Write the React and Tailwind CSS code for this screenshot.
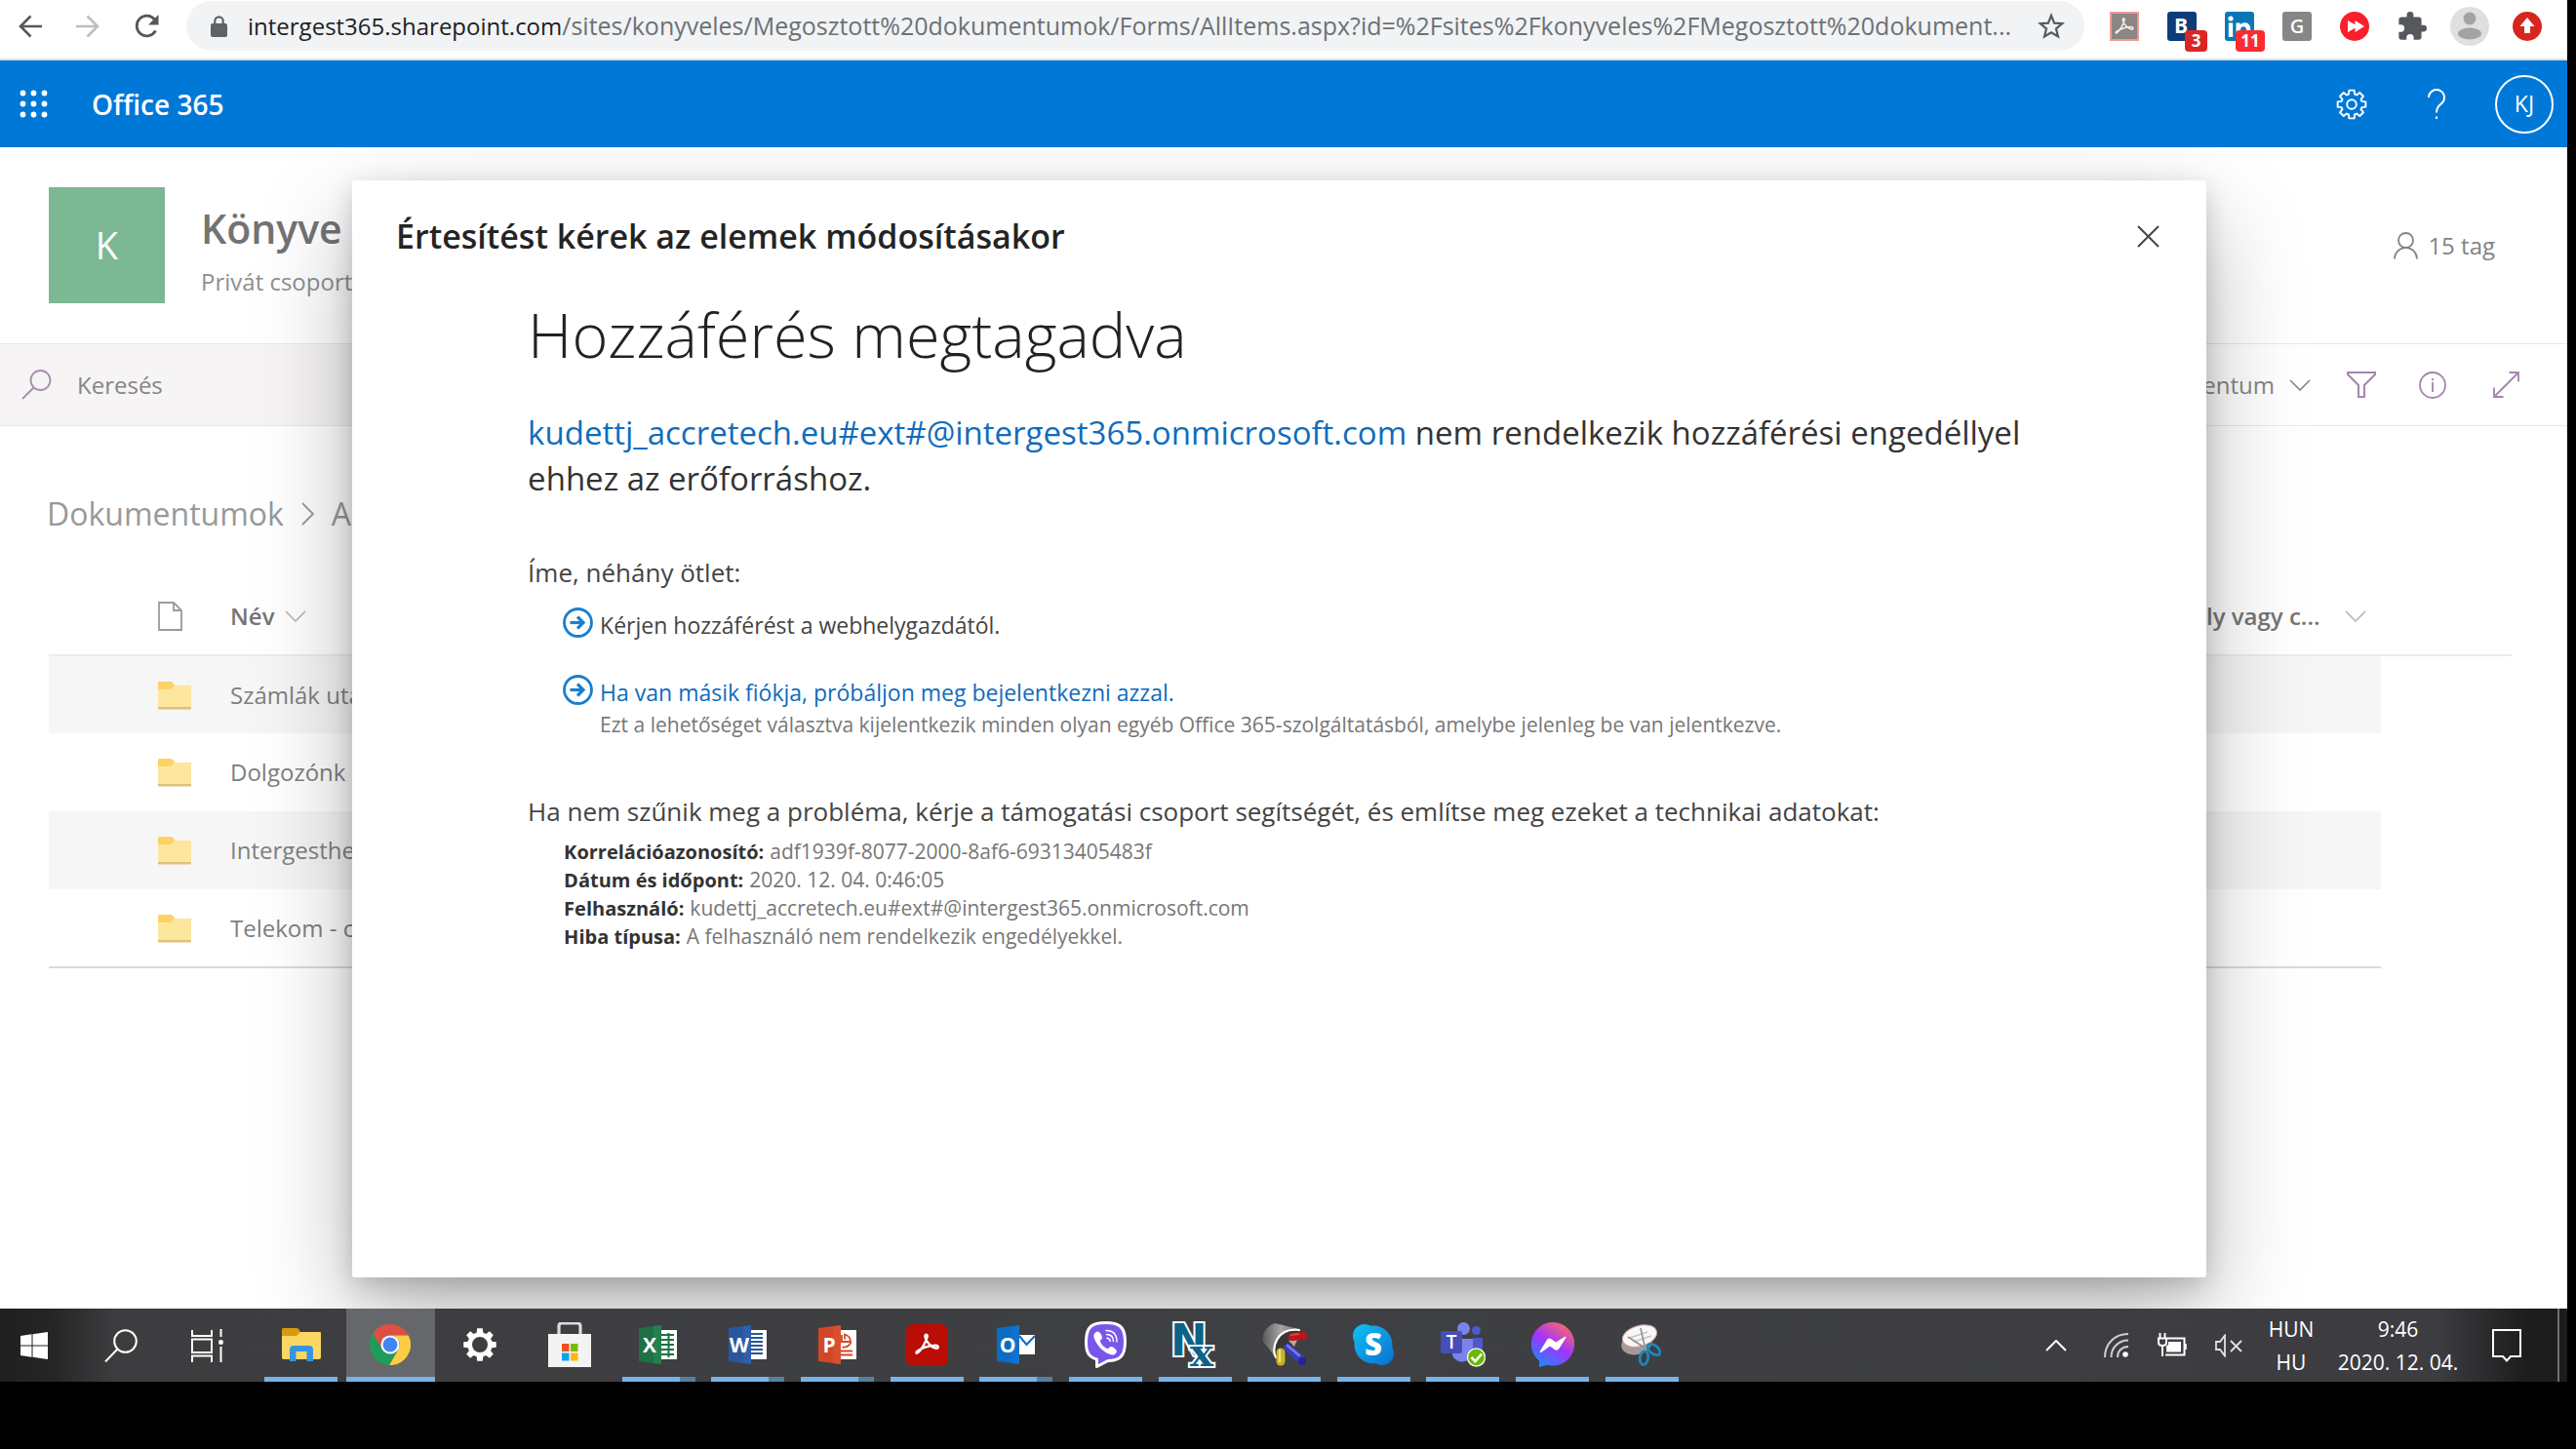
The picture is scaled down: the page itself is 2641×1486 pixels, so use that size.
import React from "react";

/* ---------- shared helpers ---------- */

function gearPath(cx, cy, teeth, outer, inner, spread = 0.5) {
  const step = (Math.PI * 2) / teeth;
  const at = (r, a) => `${(cx + r * Math.sin(a)).toFixed(2)} ${(cy - r * Math.cos(a)).toFixed(2)}`;
  let d = "";
  for (let i = 0; i < teeth; i++) {
    const a = i * step;
    const half = (step * spread) / 2;
    d += `${i ? "L" : "M"}${at(inner, a - half * 1.35)}L${at(outer, a - half * 0.85)}L${at(outer, a + half * 0.85)}L${at(inner, a + half * 1.35)}`;
  }
  return d + "Z";
}

const AcrobatMark = ({ color, width = 1.8 }) => (
  <path
    d="M4.2 18.6C7.6 16.6 11.6 8.4 12.2 5.2c.3-1.9-2.2-2.1-1.9.2.6 4.4 5.6 9.3 9.3 9.6 2 .1 1.900-2.500-.6-2.500-4.600 0-11.500 2.300-14.800 4.700-1.700 1.300-1 2.400 0 1.400Z"
    fill="none"
    stroke={color}
    strokeWidth={width}
    strokeLinejoin="round"
  />
);

/* ---------- browser bar ---------- */

function BrowserBar() {
  return (
    <header className="flex h-[62px] items-center border-b-2 border-[#dcdfe3] bg-white pr-[26px] pb-[7px] pl-[19px]">
      <nav className="flex items-center gap-[35px] text-[#55585c]">
        <button aria-label="Vissza">
          <svg className="size-[24px]" viewBox="0 0 24 24" fill="none" stroke="currentColor" strokeWidth="2.6">
            <path d="M24 12H2M12.500 1.500 2 12l10.500 10.500" />
          </svg>
        </button>
        <button aria-label="Előre" className="text-[#bcbec1]">
          <svg className="size-[24px]" viewBox="0 0 24 24" fill="none" stroke="currentColor" strokeWidth="2.6">
            <path d="M0 12h22M11.500 1.500 22 12 11.500 22.500" />
          </svg>
        </button>
        <button aria-label="Újratöltés">
          <svg className="size-[26px]" viewBox="0 0 26 26" fill="none" stroke="currentColor" strokeWidth="2.8">
            <path d="M22.500 17.500A10.300 10.300 0 1 1 21.500 6" />
            <path d="M25.500 1v10.500H15Z" fill="currentColor" stroke="none" />
          </svg>
        </button>
      </nav>
      <div className="ml-[28px] flex h-[51px] min-w-0 flex-1 items-center rounded-full bg-[#f1f3f4] pr-[20px] pl-[25px]">
        <svg className="w-[17px] shrink-0" viewBox="0 0 17 22">
          <rect y="8" width="17" height="14" rx="2" fill="#5f6368" />
          <path d="M4.300 9V5.500a4.200 4.200 0 0 1 8.400 0V9" fill="none" stroke="#5f6368" strokeWidth="2.200" />
        </svg>
        <a href="#url" className="ml-[21px] min-w-0 flex-1 whitespace-nowrap text-[25px] leading-[36px] text-[#6d7175]">
          <span className="text-[24px] text-[#202124]">intergest365.sharepoint.com</span>
          /sites/konyveles/Megosztott%20dokumentumok/Forms/AllItems.aspx?id=%2Fsites%2Fkonyveles%2FMegosztott%20dokument...
        </a>
        <button aria-label="Könyvjelző">
          <svg className="size-[28px]" viewBox="0 0 28 28" fill="none" stroke="#55585c" strokeWidth="2.200">
            <path d="m14 3 3.100 7.600 8.200.6-6.300 5.300 2 8L14 20.200 7 24.500l2-8-6.300-5.300 8.200-.6Z" />
          </svg>
        </button>
      </div>
      <div className="ml-[26px] flex items-center gap-[29px]">
        <button aria-label="Adobe Acrobat">
          <svg className="size-[30px]" viewBox="0 0 30 30">
            <rect x="1" y="1" width="28" height="28" fill="#8b8584" stroke="#ee9a94" strokeWidth="2" />
            <g transform="translate(3 3)">
              <AcrobatMark color="#f3eeee" width={1.5} />
            </g>
          </svg>
        </button>
        <button aria-label="Bővítmény B" className="relative">
          <svg className="size-[30px]" viewBox="0 0 30 30">
            <rect width="30" height="30" rx="3" fill="#0b3d78" />
            <text x="14" y="22" textAnchor="middle" fontSize="21" fontWeight="700" fill="#fff">B</text>
          </svg>
          <span className="absolute top-[19px] left-[18px] flex h-[22px] w-[23px] items-center justify-center rounded-[4px] bg-[#dc2626] text-[17px] leading-none font-bold text-white">
            3
          </span>
        </button>
        <button aria-label="LinkedIn" className="relative">
          <svg className="size-[30px]" viewBox="0 0 30 30">
            <rect width="30" height="30" rx="3" fill="#0a77b5" />
            <g fill="#fff">
              <circle cx="6" cy="7" r="2.600" />
              <path d="M3.800 11.500h4.400V26H3.800ZM11.500 11.500h4.200v2c2.400-3.600 10.500-3.400 10.500 4V26H22v-7.500c0-4.500-6-4.400-6 0V26h-4.500Z" />
            </g>
          </svg>
          <span className="absolute top-[19px] left-[11px] flex h-[22px] w-[30px] items-center justify-center rounded-[4px] bg-[#fb2b32] text-[17px] leading-none font-bold text-white">
            11
          </span>
        </button>
        <button aria-label="Bővítmény G">
          <svg className="size-[30px]" viewBox="0 0 30 30">
            <rect width="30" height="30" rx="3" fill="#868686" />
            <text x="15" y="22" textAnchor="middle" fontSize="20" fontWeight="600" fill="#fff">G</text>
          </svg>
        </button>
        <button aria-label="Gyorsítás">
          <svg className="size-[30px]" viewBox="0 0 30 30">
            <circle cx="15" cy="15" r="15" fill="#fb1f2b" />
            <path d="M8 9l7.500 4.200V9L25 15l-9.500 6v-4.200L8 21Z" fill="#fff" />
          </svg>
        </button>
        <button aria-label="Bővítmények">
          <svg className="size-[30px]" viewBox="1 1 22 22" fill="#55585c">
            <path d="M20.500 11H19V7a2 2 0 0 0-2-2h-4V3.500a2.500 2.500 0 0 0-5 0V5H4a2 2 0 0 0-2 2v3.800h1.500a2.700 2.700 0 0 1 0 5.400H2V20a2 2 0 0 0 2 2h3.800v-1.500a2.700 2.700 0 0 1 5.400 0V22H17a2 2 0 0 0 2-2v-4h1.500a2.500 2.500 0 0 0 0-5Z" />
          </svg>
        </button>
        <button aria-label="Profil" className="-mx-[5px]">
          <svg className="size-[40px]" viewBox="0 0 40 40">
            <circle cx="20" cy="20" r="20" fill="#dfdfdf" />
            <circle cx="20" cy="12" r="6.500" fill="#a3a3a3" />
            <ellipse cx="20" cy="27.500" rx="12" ry="6" fill="#a3a3a3" />
          </svg>
        </button>
        <button aria-label="Frissítés">
          <svg className="size-[30px]" viewBox="0 0 30 30">
            <circle cx="15" cy="15" r="15" fill="#d7261e" />
            <path d="m15 6 7.500 9H18v7h-6v-7H7.500Z" fill="#fff" />
          </svg>
        </button>
      </div>
    </header>
  );
}

/* ---------- Office suite header ---------- */

function SuiteBar() {
  return (
    <div className="flex h-[89px] items-center bg-[#0078d7] pr-[14px] pl-[20px] text-white">
      <button aria-label="Alkalmazásindító">
        <svg className="size-[29px]" viewBox="0 0 29 29" fill="currentColor">
          {[3.5, 14.5, 25.5].map((y) => [3.5, 14.5, 25.5].map((x) => <circle key={`${x}-${y}`} cx={x} cy={y} r="2.900" />))}
        </svg>
      </button>
      <a href="#office" className="ml-[45px] text-[28px] font-semibold">Office 365</a>
      <div className="ml-auto flex items-center">
        <button aria-label="Beállítások">
          <svg className="size-[32px]" viewBox="0 0 32 32" fill="none" stroke="currentColor" strokeWidth="1.900" strokeLinejoin="round">
            <path d={gearPath(16, 16, 8, 14.6, 10.8, 0.55)} />
            <circle cx="16" cy="16" r="4.800" />
          </svg>
        </button>
        <button aria-label="Súgó" className="ml-[61px]">
          <svg className="h-[32px] w-[20px]" viewBox="0 0 20 32" fill="none" stroke="currentColor" strokeWidth="2">
            <path d="M2 9a8 8 0 1 1 13.500 5.800C12 18 10 19.500 10 24.500" />
            <path d="M10 28.500v2.500" />
          </svg>
        </button>
        <button className="ml-[50px] flex size-[60px] items-center justify-center rounded-full border-2 border-white text-[23px]">KJ</button>
      </div>
    </div>
  );
}

/* ---------- SharePoint page ---------- */

const ChevronDown = ({ className }) => (
  <svg className={className} viewBox="0 0 22 12" fill="none" stroke="currentColor" strokeWidth="1.600">
    <path d="m1 1 10 10L21 1" />
  </svg>
);

const Folder = () => (
  <svg className="h-[30px] w-[34px]" viewBox="0 0 34 30">
    <path d="M0 2.500Q0 1 1.500 1H13q1.200 0 2 1l2.500 3H34v23H0Z" fill="#fdd264" />
    <path d="M0 9h13l4-4h15.500Q34 5 34 6.500V28H0Z" fill="#fde69e" />
    <path d="M0 27h34v1.500q0 1-1 1H1q-1 0-1-1Z" fill="#dfbf7c" />
  </svg>
);

const files = [
  { name: "Számlák uta", shaded: true },
  { name: "Dolgozónk", shaded: false },
  { name: "Intergesthe", shaded: true },
  { name: "Telekom - c", shaded: false },
];

function SitePage() {
  return (
    <div className="whitespace-nowrap">
      <div className="flex items-center pt-[41px] pr-[74px] pb-[41px] pl-[50px]">
        <div className="flex size-[119px] items-center justify-center bg-[#7bb893] text-[38px] text-white">K</div>
        <div className="ml-[37px] pt-[8px]">
          <h1 className="text-[41px] leading-[54px] font-semibold text-[#737373]">Könyve</h1>
          <p className="mt-[12px] text-[24px] leading-[32px] text-[#8f8f8f]">Privát csoport</p>
        </div>
        <div className="ml-auto flex items-center gap-[10px] text-[24px] text-[#838383]">
          <svg className="h-[28px] w-[25px]" viewBox="0 0 25 28" fill="none" stroke="currentColor" strokeWidth="1.800">
            <circle cx="12.500" cy="8.500" r="7.500" />
            <path d="M1 27.500a11.500 11.500 0 0 1 23 0" />
          </svg>
          15 tag
        </div>
      </div>

      <div className="flex h-[85px] border-y border-[#e9e8e8]">
        <label className="flex w-[20%] items-center bg-[#f6f4f4] pl-[22px]">
          <svg className="size-[31px]" viewBox="0 0 31 31" fill="none" stroke="#a98cb0" strokeWidth="1.800">
            <circle cx="19.500" cy="11" r="10" />
            <path d="M12.500 18.500 1 30" />
          </svg>
          <input
            aria-label="Keresés"
            placeholder="Keresés"
            className="ml-[26px] w-[240px] bg-transparent text-[24px] outline-none placeholder:text-[#858585]"
          />
        </label>
        <div className="ml-auto flex items-center pr-[49px] text-[#a585ac]">
          <button className="flex items-center gap-[15px] text-[24px] text-[#858585]">
            entum
            <ChevronDown className="w-[22px]" />
          </button>
          <button aria-label="Szűrő" className="ml-[37px]">
            <svg className="h-[27px] w-[30px]" viewBox="0 0 30 27" fill="none" stroke="currentColor" strokeWidth="2">
              <path d="M1 1h28v2L18 14v12h-6V14L1 3Z" />
            </svg>
          </button>
          <button aria-label="Információ" className="ml-[44px]">
            <svg className="size-[28px]" viewBox="0 0 28 28" fill="none" stroke="currentColor" strokeWidth="1.800">
              <circle cx="14" cy="14" r="13" />
              <path d="M14 11v10M14 7v2.200" />
            </svg>
          </button>
          <button aria-label="Kibontás" className="ml-[48px]">
            <svg className="size-[27px]" viewBox="0 0 27 27" fill="none" stroke="currentColor" strokeWidth="1.800">
              <path d="M1 26 26 1M16.500 1H26v9.500M1 16.500V26h9.500" />
            </svg>
          </button>
        </div>
      </div>

      <nav className="mt-[68px] ml-[48px] flex h-[44px] items-center text-[32px] text-[#999]">
        <a href="#dokumentumok">Dokumentumok</a>
        <svg className="mx-[18px] h-[24px] w-[13px]" viewBox="0 0 13 24" fill="none" stroke="currentColor" strokeWidth="1.800">
          <path d="m1 1 11 11L1 23" />
        </svg>
        <a href="#a">A</a>
      </nav>

      <div className="mt-[44px] mr-[57px] ml-[50px]">
        <table className="w-full table-fixed border-collapse text-left text-[24px] text-[#808080]">
          <colgroup>
            <col className="w-[112px]" />
            <col className="w-[74px]" />
            <col />
            <col className="w-[179px]" />
            <col className="w-[134px]" />
          </colgroup>
          <thead>
            <tr className="h-[79px] border-b-2 border-[#ececec] text-[#757575]">
              <td />
              <td>
                <svg className="h-[30px] w-[25px]" viewBox="0 0 25 30" fill="none" stroke="#9a9a9a" strokeWidth="1.800">
                  <path d="M1 1h15l8 8v20H1Z" />
                  <path d="M16 1v8h8" />
                </svg>
              </td>
              <th className="font-semibold">
                <span className="flex items-center gap-[11px]">
                  Név <ChevronDown className="w-[22px] text-[#b5b5b5]" />
                </span>
              </th>
              <th className="font-semibold">
                <span className="flex items-center gap-[25px]">
                  ly vagy c... <ChevronDown className="w-[22px] shrink-0 text-[#b5b5b5]" />
                </span>
              </th>
              <td />
            </tr>
          </thead>
          <tbody>
            {files.map((f, i) => {
              const shade = f.shaded ? "bg-[#f6f6f6]" : "";
              const edge = i === files.length - 1 ? "border-b-2 border-[#dadada]" : "";
              return (
                <tr key={f.name} className="h-[80px]">
                  <td className={`${shade} ${edge}`} />
                  <td className={`${shade} ${edge}`}>
                    <Folder />
                  </td>
                  <td className={`${shade} ${edge}`}>{f.name}</td>
                  <td className={`${shade} ${edge}`} />
                  <td />
                </tr>
              );
            })}
          </tbody>
        </table>
      </div>
    </div>
  );
}

/* ---------- dialog ---------- */

const ArrowBullet = () => (
  <svg className="size-[31px] shrink-0" viewBox="0 0 31 31" fill="none" stroke="#1a7fd0">
    <circle cx="15.500" cy="15.500" r="14" strokeWidth="2.800" />
    <path d="M7.500 15.500h13" strokeWidth="3.200" />
    <path d="m15 9.500 6 6-6 6" strokeWidth="3.200" />
  </svg>
);

const details = [
  ["Korrelációazonosító:", "adf1939f-8077-2000-8af6-69313405483f"],
  ["Dátum és időpont:", "2020. 12. 04. 0:46:05"],
  ["Felhasználó:", "kudettj_accretech.eu#ext#@intergest365.onmicrosoft.com"],
  ["Hiba típusa:", "A felhasználó nem rendelkezik engedélyekkel."],
];

function AccessDialog() {
  return (
    <section
      role="dialog"
      aria-label="Értesítést kérek az elemek módosításakor"
      className="flex-1 rounded-[3px] bg-white text-[#333] shadow-[0_40px_100px_rgba(0,0,0,0.28),0_8px_26px_rgba(0,0,0,0.18)]"
    >
      <div className="flex h-[114px] items-center justify-between pr-[48px] pl-[45px]">
        <h2 className="text-[34px] font-semibold text-[#242424]">Értesítést kérek az elemek módosításakor</h2>
        <button aria-label="Bezárás">
          <svg className="size-[23px]" viewBox="0 0 23 23" fill="none" stroke="#444" strokeWidth="2">
            <path d="m1 1 21 21M22 1 1 22" />
          </svg>
        </button>
      </div>
      <div className="pr-[142px] pl-[180px]">
        <h3 className="text-[63px] leading-[88px] font-light text-[#222]">Hozzáférés megtagadva</h3>
        <p className="mt-[33px] text-[33px] leading-[47px]">
          <a href="#mail" className="text-[#0f6cbd]">kudettj_accretech.eu#ext#@intergest365.onmicrosoft.com</a> nem
          rendelkezik hozzáférési engedéllyel ehhez az erőforráshoz.
        </p>
        <p className="mt-[55px] text-[26px] leading-[36px] text-[#444]">Íme, néhány ötlet:</p>
        <ul className="mt-[18px] pl-[36px] text-[23px] leading-[32px]">
          <li className="flex gap-[7px] text-[#444]">
            <ArrowBullet />
            <span className="pt-[2px]">Kérjen hozzáférést a webhelygazdától.</span>
          </li>
          <li className="mt-[35px]">
            <a href="#bejelentkezes" className="flex gap-[7px] text-[#0f6cbd]">
              <ArrowBullet />
              <span className="pt-[2px]">Ha van másik fiókja, próbáljon meg bejelentkezni azzal.</span>
            </a>
            <p className="mt-[2px] ml-[38px] text-[21px] leading-[30px] text-[#777]">
              Ezt a lehetőséget választva kijelentkezik minden olyan egyéb Office 365-szolgáltatásból, amelybe jelenleg be van
              jelentkezve.
            </p>
          </li>
        </ul>
        <p className="mt-[56px] text-[26px] leading-[36px] text-[#444]">
          Ha nem szűnik meg a probléma, kérje a támogatási csoport segítségét, és említse meg ezeket a technikai adatokat:
        </p>
        <dl className="mt-[9px] pl-[37px] text-[21px] leading-[29px]">
          {details.map(([k, v]) => (
            <div key={k} className="flex gap-[6px]">
              <dt className="text-[20px] font-bold text-[#333]">{k}</dt>
              <dd className="text-[#777]">{v}</dd>
            </div>
          ))}
        </dl>
      </div>
    </section>
  );
}

/* ---------- taskbar ---------- */

const OfficeDoor = ({ color, dark, letter }) => (
  <>
    <path d="M0 3 23 0v40L0 37Z" fill={color} />
    <path d="M15 1 23 0v40l-8-1Z" fill={dark} opacity="0.4" />
    <text x="11" y="28" textAnchor="middle" fontSize="21" fontWeight="700" fill="#fff">{letter}</text>
  </>
);

const icons = {
  explorer: (
    <svg className="h-[34px] w-[40px]" viewBox="0 0 40 34">
      <path d="M0 1.500Q0 0 1.500 0H15q2 0 3 2l1 2h21v10H0Z" fill="#d99a12" />
      <path d="M0 8h15l4-4h19.500Q40 4 40 5.500V30q0 2-2 2H2q-2 0-2-2Z" fill="#fcd664" />
      <path d="M8 34V22q0-4 4-4h16q4 0 4 4v12h-6.500V24h-11v10Z" fill="#3794e4" />
    </svg>
  ),
  chrome: (
    <svg className="size-[42px]" viewBox="0 0 44 44">
      <path d="M22 12h19.600A22 22 0 0 0 3.500 10l9.800 17A10 10 0 0 1 22 12Z" fill="#de4f43" />
      <path d="M22 12h19.600A22 22 0 0 1 20.900 44l9.800-17A10 10 0 0 0 22 12Z" fill="#fccc44" />
      <path d="M20.900 44A22 22 0 0 1 3.500 10l9.800 17a10 10 0 0 0 17.400 0Z" fill="#1f9d58" />
      <circle cx="22" cy="22" r="10" fill="#fff" />
      <circle cx="22" cy="22" r="7.800" fill="#4285f4" />
    </svg>
  ),
  settings: (
    <svg className="size-[34px]" viewBox="0 0 34 34">
      <path fillRule="evenodd" fill="#fff" d={gearPath(17, 17, 8, 17, 12.8, 0.5) + "M17 9a8 8 0 1 0 0 16 8 8 0 0 0 0-16Z"} />
    </svg>
  ),
  store: (
    <svg className="h-[46px] w-[46px]" viewBox="0 0 46 46">
      <path d="M12 15V4q0-3 3-3h16q3 0 3 3v11" fill="none" stroke="#dcdcdc" strokeWidth="3.200" />
      <path d="M1 12h44v34H1Z" fill="#f3f3f3" />
      <path d="M15 22h7.500v8H15Z" fill="#ef4f23" />
      <path d="M24 22h7.500v8H24Z" fill="#7cba04" />
      <path d="M15 31.500h7.500v8H15Z" fill="#05a4ee" />
      <path d="M24 31.500h7.500v8H24Z" fill="#fdb60a" />
    </svg>
  ),
  excel: (
    <svg className="size-[40px]" viewBox="0 0 40 40">
      <path d="M23 5h16v30H23Z" fill="#fff" />
      <path d="M23 10h13M23 15h13M23 20h13M23 25h13M23 30h13M30.500 8v25" stroke="#1d7145" strokeWidth="2" />
      <OfficeDoor color="#1d7145" dark="#2a9a60" letter="X" />
    </svg>
  ),
  word: (
    <svg className="size-[40px]" viewBox="0 0 40 40">
      <path d="M23 5h16v30H23Z" fill="#fff" />
      <path d="M23 9h12M23 13h12M23 17h12M23 21h12M23 25h12M23 29h12" stroke="#2b579a" strokeWidth="1.800" />
      <OfficeDoor color="#2a56a0" dark="#3a6fc4" letter="W" />
    </svg>
  ),
  powerpoint: (
    <svg className="size-[40px]" viewBox="0 0 40 40">
      <path d="M23 5h16v30H23Z" fill="#fff" />
      <path d="M24 10v7h9a8 8 0 0 0-6-7.500v5" fill="none" stroke="#d24726" strokeWidth="1.800" />
      <path d="M33.500 17.500a8 8 0 0 1-9 5M23 26.500h12M23 30.500h12" fill="none" stroke="#d24726" strokeWidth="1.800" />
      <OfficeDoor color="#d24726" dark="#e2603f" letter="P" />
    </svg>
  ),
  acrobat: (
    <svg className="size-[43px]" viewBox="0 0 43 43">
      <rect width="43" height="43" rx="7" fill="#b90d05" />
      <g transform="translate(6.500 6) scale(1.250)">
        <AcrobatMark color="#fff" width={1.9} />
      </g>
    </svg>
  ),
  outlook: (
    <svg className="size-[40px]" viewBox="0 0 40 40">
      <path d="M23 10h16v20H23Z" fill="#fff" />
      <path d="m23 11 7.500 9L39 11" fill="none" stroke="#0a6cc5" strokeWidth="2" />
      <OfficeDoor color="#0a6cc5" dark="#1580dd" letter="O" />
    </svg>
  ),
  viber: (
    <svg className="h-[48px] w-[43px]" viewBox="0 0 43 48">
      <path d="M21.500 1.500C35 1.500 41.500 5 41.500 21S35 40 24 40.500L12.500 46.500V39C4 36.500 1.500 32 1.500 21 1.500 5 8 1.500 21.500 1.500Z" fill="#7a55ea" stroke="#fff" strokeWidth="3" strokeLinejoin="round" />
      <path d="M12 11c3-2 6 4 6 6s-3 2-2 4c1.500 3.500 4 5.500 7 7 2 .8 2.500-2.500 4.500-2 2 .6 6.500 3.500 5 6-1.800 3-4 3-7 1.800C18 31 12 24 9.500 16.500 9 14 10 12.200 12 11Z" fill="#fff" />
      <path d="M22 9.500c7 0 11 4 11 11.500M22.500 13.500c4.500.2 7 2.500 7 7M23 17.300c2 .2 3 1.200 3.200 3.200" fill="none" stroke="#fff" strokeWidth="1.400" strokeLinecap="round" />
    </svg>
  ),
  nx: (
    <svg
      className="size-[48px] overflow-visible"
      viewBox="0 0 48 48"
      fontFamily="'DejaVu Sans', sans-serif"
      fontWeight="700"
      fill="#0d6289"
      stroke="#fff"
      strokeWidth="4"
      strokeLinejoin="miter"
      paintOrder="stroke"
    >
      <text x="-1" y="35" fontSize="45">N</text>
      <text x="19" y="46" fontSize="40" fontFamily="'DejaVu Serif', serif">x</text>
    </svg>
  ),
  bucket: (
    <svg className="size-[46px]" viewBox="0 0 46 46">
      <defs>
        <linearGradient id="bucketSide" x1="0" x2="1">
          <stop offset="0" stopColor="#5b5b5b" />
          <stop offset="0.500" stopColor="#a5a5a5" />
          <stop offset="1" stopColor="#6b6b6b" />
        </linearGradient>
      </defs>
      <path d="M13 1C5 3-1 12 1 20l13 16C10 26 16 6 38 7Z" fill="url(#bucketSide)" />
      <path d="M14 36C9 28 14 5 38 8l1 8-9 8-7 12Z" fill="#3a3637" />
      <path d="M14 36C9 28 14 5 38 8" fill="none" stroke="#fff" strokeWidth="2.200" strokeLinecap="round" />
      <path d="m27 19 10-3-4 9Z" fill="#b9a3a3" />
      <path d="m31 15 11-1" stroke="#bb161b" strokeWidth="8" strokeLinecap="round" />
      <path d="m30 13 7-1" stroke="#e0413f" strokeWidth="2" strokeLinecap="round" />
      <path d="m26 26 14 12" stroke="#3a3cc0" strokeWidth="8" strokeLinecap="round" />
      <path d="m26 24 12 10" stroke="#7b7de6" strokeWidth="2.500" strokeLinecap="round" />
      <circle cx="41" cy="40" r="4" fill="#22249a" />
      <path d="M19 31v9" stroke="#c8b12a" strokeWidth="9" strokeLinecap="round" />
      <path d="M18 29v11" stroke="#f0e070" strokeWidth="2.500" strokeLinecap="round" />
    </svg>
  ),
  skype: (
    <svg className="size-[44px]" viewBox="0 0 44 44">
      <defs>
        <linearGradient id="skypeBody" gradientUnits="userSpaceOnUse" x1="4" y1="4" x2="40" y2="40">
          <stop offset="0" stopColor="#10bdf2" />
          <stop offset="1" stopColor="#0a74d2" />
        </linearGradient>
      </defs>
      <g fill="url(#skypeBody)">
        <circle cx="13" cy="13" r="12" />
        <circle cx="31" cy="31" r="12" />
        <circle cx="22" cy="22" r="19.500" />
      </g>
      <text x="22" y="33" textAnchor="middle" fontSize="31" fontWeight="800" fill="#fff">S</text>
    </svg>
  ),
  teams: (
    <svg className="size-[46px]" viewBox="0 0 46 46">
      <circle cx="23.500" cy="6.500" r="6.500" fill="#7b83eb" />
      <circle cx="36.500" cy="8.500" r="4.500" fill="#5059c9" />
      <path d="M12 17h21v14a11 11 0 0 1-21 3Z" fill="#7b83eb" />
      <path d="M33 16h10v14q-2 6-10 4Z" fill="#5059c9" />
      <rect y="9" width="22" height="23" rx="2" fill="#464eb8" />
      <text x="11" y="27" textAnchor="middle" fontSize="19" fontWeight="600" fill="#fff">T</text>
      <circle cx="36.500" cy="36" r="9" fill="#6bb700" stroke="#e9f4d8" strokeWidth="1.500" />
      <path d="m31.500 36 4 4 6.500-7.500" fill="none" stroke="#fff" strokeWidth="2.600" />
    </svg>
  ),
  messenger: (
    <svg className="size-[46px]" viewBox="0 0 46 46">
      <defs>
        <linearGradient id="messengerBody" x1="0.200" y1="1" x2="0.800" y2="0">
          <stop offset="0" stopColor="#1a8cff" />
          <stop offset="0.500" stopColor="#a033ff" />
          <stop offset="1" stopColor="#ff6d66" />
        </linearGradient>
      </defs>
      <path d="M23 0a22.300 22.300 0 1 1-6 43.800L9 46v-6.500A22.300 22.300 0 0 1 23 0Z" fill="url(#messengerBody)" />
      <path d="M10 29.500 17 18q2-2.500 4.500-.8L26 20.500l9-5.500q2.500-1 1.200 1.200L29.500 27q-2 2.800-4.700 1l-4.700-3.500-8.800 6.200q-2.200 1-1.300-1.200Z" fill="#fff" />
    </svg>
  ),
  snip: (
    <svg className="size-[44px]" viewBox="0 0 44 44">
      <ellipse cx="17" cy="21" rx="16" ry="11" transform="rotate(-14 17 21)" fill="#a9989a" />
      <ellipse cx="20" cy="13" rx="18" ry="10.500" transform="rotate(-16 20 13)" fill="#fbf6f6" stroke="#c9a4a6" strokeWidth="1" />
      <path d="m10 15 18-6M14 19l18-6" stroke="#bfc4c4" strokeWidth="1.500" />
      <path d="m21 5 4 18M8 14l17 11" stroke="#8d9292" strokeWidth="1.600" />
      <g fill="none" stroke="#1d86bd" strokeWidth="2.800">
        <ellipse cx="24.500" cy="35.500" rx="4.200" ry="7" transform="rotate(8 24.500 35.500)" />
        <ellipse cx="34.500" cy="27" rx="4.200" ry="7.500" transform="rotate(-52 34.500 27)" />
      </g>
    </svg>
  ),
};

const apps = [
  { id: "explorer", label: "Fájlkezelő", state: "open" },
  { id: "chrome", label: "Chrome", state: "active" },
  { id: "settings", label: "Gépház", state: "idle" },
  { id: "store", label: "Store", state: "idle" },
  { id: "excel", label: "Excel", state: "stacked" },
  { id: "word", label: "Word", state: "stacked" },
  { id: "powerpoint", label: "PowerPoint", state: "stacked" },
  { id: "acrobat", label: "Acrobat", state: "open" },
  { id: "outlook", label: "Outlook", state: "stacked" },
  { id: "viber", label: "Viber", state: "open" },
  { id: "nx", label: "NX", state: "open" },
  { id: "bucket", label: "Paint", state: "open" },
  { id: "skype", label: "Skype", state: "open" },
  { id: "teams", label: "Teams", state: "open" },
  { id: "messenger", label: "Messenger", state: "open" },
  { id: "snip", label: "Képmetsző", state: "open" },
];

function AppButton({ app }) {
  const { state } = app;
  return (
    <button aria-label={app.label} className={`flex h-[75px] flex-col items-center ${state === "active" ? "bg-[#66676a]" : ""}`}>
      <span className="flex h-[70px] items-center justify-center pt-[4px]">{icons[app.id]}</span>
      {state === "active" && <span className="h-[5px] w-full bg-[#76b3e6]" />}
      {state === "open" && <span className="h-[5px] w-[75px] bg-[#76b3e6]" />}
      {state === "stacked" && (
        <span className="flex h-[5px] w-[75px]">
          <span className="flex-1 bg-[#76b3e6]" />
          <span className="w-[16px] bg-[#55809f]" />
        </span>
      )}
    </button>
  );
}

function Taskbar() {
  return (
    <footer className="flex h-[75px] items-center bg-[linear-gradient(90deg,#1f1f1f_0%,#252526_2%,#3d3d40_4.500%,#3f4043_50%,#3c3c41_95%,#1c1c1c_98.500%)] text-white">
      <button aria-label="Start" className="flex w-[70px] justify-center">
        <svg className="size-[28px]" viewBox="0 0 28 28" fill="#fff">
          <path d="M0 4 11.500 2.300V13.500H0ZM12.500 2.200 28 0v13.500H12.500ZM0 14.500h11.500v11.200L0 24ZM12.500 14.500H28V28l-15.500-2.200Z" />
        </svg>
      </button>
      <button aria-label="Keresés a gépen" className="flex w-[108px] justify-center">
        <svg className="size-[34px]" viewBox="0 0 34 34" fill="none" stroke="#fff" strokeWidth="2">
          <circle cx="21.500" cy="12.500" r="11.300" />
          <path d="M13.500 20.500 1 33.500" />
        </svg>
      </button>
      <button aria-label="Feladatnézet" className="flex w-[70px] justify-center">
        <svg className="size-[34px]" viewBox="0 0 34 34" fill="none" stroke="#fff" strokeWidth="2">
          <path d="M1 1v6h20V1M1 10.500h20V24H1ZM1 34v-6.500h20V34M30.500 0v8M30.500 18v16" />
          <circle cx="30.500" cy="13.500" r="2.200" fill="#fff" stroke="none" />
          <path d="M28.500 13.500h4" strokeWidth="4" />
        </svg>
      </button>
      <div className="ml-[15px] grid w-[1466px] grid-cols-16">
        {apps.map((app) => (
          <AppButton key={app.id} app={app} />
        ))}
      </div>
      <div className="ml-auto flex h-full items-center text-center text-[21px] leading-[34px]">
        <button aria-label="Rejtett ikonok">
          <svg className="w-[22px]" viewBox="0 0 22 12" fill="none" stroke="#fff" strokeWidth="2">
            <path d="M1 11 11 1l10 10" />
          </svg>
        </button>
        <svg className="ml-[38px] size-[25px]" viewBox="0 0 25 25" fill="none" stroke="#cfcfcf" strokeWidth="2">
          <path d="M1 25C1 11 11 1 25 1" />
          <path d="M7.500 25C7.500 15 15 7.500 25 7.500" />
          <path d="M14 25c0-6.500 4.500-11 11-11" />
          <circle cx="22" cy="22" r="2.800" fill="#fff" stroke="none" />
        </svg>
        <svg className="ml-[30px] h-[25px] w-[30px]" viewBox="0 0 30 25" fill="none" stroke="#fff" strokeWidth="2">
          <path d="M10 5.500h17.500v17H8" />
          <path d="M11 9h13v10.500H9v-6l2-1.500Z" fill="#fff" stroke="none" />
          <path d="M28.500 11v6" strokeWidth="2.500" />
          <path d="M2.500 0v5M7.500 0v5M1 5.500h8v4Q9 13 5 13T1 9.500ZM5 13v11" />
        </svg>
        <svg className="ml-[29px] h-[24px] w-[28px]" viewBox="0 0 28 24" fill="none" stroke="#e2e2e2" strokeWidth="1.800">
          <path d="M1 8h4l5-6.500v21L5 16H1Z" />
          <path d="m16 7 11 11M27 7 16 18" />
        </svg>
        <button className="ml-[27px] flex w-[46px] flex-col items-center">
          <span>HUN</span>
          <span>HU</span>
        </button>
        <div className="ml-[24px] flex w-[125px] flex-col items-center whitespace-nowrap">
          <span>9:46</span>
          <span>2020. 12. 04.</span>
        </div>
        <button aria-label="Értesítések" className="ml-[34px]">
          <svg className="h-[34px] w-[30px]" viewBox="0 0 30 34" fill="none" stroke="#fff" strokeWidth="2">
            <path d="M1 1h28v27H19l-4 4.500-4-4.500H1Z" />
          </svg>
        </button>
        <span className="ml-[37px] mr-[8px] h-full w-[2px] bg-[#6f6f6f]" />
      </div>
    </footer>
  );
}

export default function App() {
  return (
    <div className="min-h-screen w-full bg-black pr-[9px] font-['Open_Sans',sans-serif]">
      <BrowserBar />
      <SuiteBar />
      <main className="relative h-[1191px] overflow-hidden bg-white">
        <SitePage />
        <div className="absolute inset-0 flex pt-[34px] pr-[14.060%] pb-[32px] pl-[13.720%]">
          <AccessDialog />
        </div>
      </main>
      <Taskbar />
    </div>
  );
}
